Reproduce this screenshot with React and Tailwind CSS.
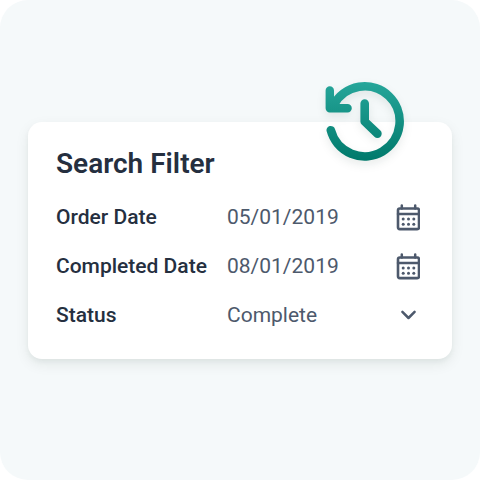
const CalendarIcon = () => (
  <svg className="h-[27px] w-6" viewBox="-0.5 0 24 27" fill="none">
    <rect
      x="1.5"
      y="4.5"
      width="21"
      height="20.6"
      rx="1.8"
      stroke="#4d596c"
      strokeWidth="2.6"
    />
    <path
      d="M1.5 9.9h21M5.3 1.4v3M18.7 1.4v3"
      stroke="#4d596c"
      strokeWidth="2.5"
      strokeLinecap="round"
    />
    <g fill="#4d596c">
      <circle cx="6.7" cy="14.9" r="1.5" />
      <circle cx="12" cy="14.9" r="1.5" />
      <circle cx="17.3" cy="14.9" r="1.5" />
      <circle cx="6.7" cy="20.2" r="1.5" />
      <circle cx="12" cy="20.2" r="1.5" />
      <circle cx="17.3" cy="20.2" r="1.5" />
    </g>
  </svg>
);

const ChevronIcon = () => (
  <svg className="h-[27px] w-6" viewBox="-0.5 0 24 27" fill="none">
    <path
      d="M5.9 9.9l6.1 6.1 6.1-6.1"
      stroke="#4d596c"
      strokeWidth="2.5"
      strokeLinecap="round"
      strokeLinejoin="round"
    />
  </svg>
);

const HistoryIcon = () => (
  <svg
    className="absolute top-[-41.5px] left-[296px] h-20 w-[84px] overflow-visible drop-shadow-[0_4px_4px_rgba(0,30,25,0.09)]"
    viewBox="324 80 84 80"
    fill="none"
  >
    <defs>
      <linearGradient
        id="history"
        gradientUnits="userSpaceOnUse"
        x1="364"
        y1="82"
        x2="364"
        y2="161"
      >
        <stop stopColor="#26a69a" />
        <stop offset="1" stopColor="#00796b" />
      </linearGradient>
    </defs>
    <g
      stroke="url(#history)"
      strokeWidth="8.6"
      strokeLinecap="round"
      strokeLinejoin="round"
    >
      <path d="M330.8 130.2A35 35 0 1 0 333.7 105" />
      <path d="M329.8 90.5V108.2H347.6" strokeWidth="8.4" />
      <path d="M364.7 103.5v18l12.7 12.2" />
    </g>
  </svg>
);

const filters = [
  { label: "Order Date", value: "05/01/2019", icon: <CalendarIcon /> },
  { label: "Completed Date", value: "08/01/2019", icon: <CalendarIcon /> },
  { label: "Status", value: "Complete", icon: <ChevronIcon /> },
];

const App = () => {
  return (
    <div className="bg-white">
      <div className="flex h-[480px] w-[480px] items-center justify-center rounded-[28px] bg-[#f5f9fa] font-['Roboto',sans-serif]">
        <section className="relative h-[237px] w-[424px] rounded-[14px] bg-white px-7 pt-[25px] shadow-[0_5px_14px_rgba(0,40,30,0.08),0_3px_5px_rgba(0,40,30,0.04)]">
          <HistoryIcon />
          <h2 className="text-[28px] leading-[34px] font-semibold text-[#252f3f]">
            Search Filter
          </h2>
          <div className="mt-3">
            {filters.map((filter) => (
              <div key={filter.label} className="flex h-[49px] items-center">
                <span className="w-[171px] pt-0.5 text-[21px] font-medium whitespace-nowrap text-[#252f3f]">
                  {filter.label}
                </span>
                <span className="flex-1 pt-0.5 text-[21px] text-[#4d596c]">
                  {filter.value}
                </span>
                <span className="mr-1">{filter.icon}</span>
              </div>
            ))}
          </div>
        </section>
      </div>
    </div>
  );
};

export default App;
